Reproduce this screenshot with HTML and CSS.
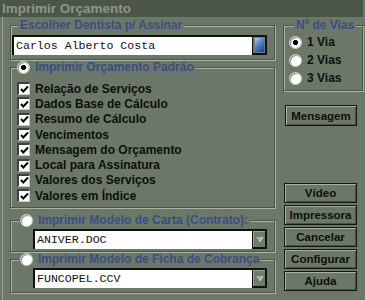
FILE: index.html
```html
<!DOCTYPE html>
<html lang="pt">
<head>
<meta charset="utf-8">
<title>Imprimir Orçamento</title>
<link rel="stylesheet" href="styles.css">
</head>
<body>
<div class="win">
  <div class="title">Imprimir Orçamento</div>
  <div class="main">
    <div class="left">
      <fieldset class="grp g1">
        <legend>Escolher Dentista p/ Assinar</legend>
        <div class="combo">
          <div class="field">Carlos Alberto Costa</div>
          <div class="lookbtn"><span class="lookicon"></span></div>
        </div>
      </fieldset>
      <fieldset class="grp g2">
        <legend><span class="radio on"></span>Imprimir Orçamento Padrão</legend>
        <ul class="checks">
          <li><span class="chk"><svg width="9" height="9" viewBox="0 0 9 9"><path d="M1 4 L3.3 6.5 L8 1.5" fill="none" stroke="#000" stroke-width="1.9"/></svg></span>Relação de Serviços</li>
          <li><span class="chk"><svg width="9" height="9" viewBox="0 0 9 9"><path d="M1 4 L3.3 6.5 L8 1.5" fill="none" stroke="#000" stroke-width="1.9"/></svg></span>Dados Base de Cálculo</li>
          <li><span class="chk"><svg width="9" height="9" viewBox="0 0 9 9"><path d="M1 4 L3.3 6.5 L8 1.5" fill="none" stroke="#000" stroke-width="1.9"/></svg></span>Resumo de Cálculo</li>
          <li><span class="chk"><svg width="9" height="9" viewBox="0 0 9 9"><path d="M1 4 L3.3 6.5 L8 1.5" fill="none" stroke="#000" stroke-width="1.9"/></svg></span>Vencimentos</li>
          <li><span class="chk"><svg width="9" height="9" viewBox="0 0 9 9"><path d="M1 4 L3.3 6.5 L8 1.5" fill="none" stroke="#000" stroke-width="1.9"/></svg></span>Mensagem do Orçamento</li>
          <li><span class="chk"><svg width="9" height="9" viewBox="0 0 9 9"><path d="M1 4 L3.3 6.5 L8 1.5" fill="none" stroke="#000" stroke-width="1.9"/></svg></span>Local para Assinatura</li>
          <li><span class="chk"><svg width="9" height="9" viewBox="0 0 9 9"><path d="M1 4 L3.3 6.5 L8 1.5" fill="none" stroke="#000" stroke-width="1.9"/></svg></span>Valores dos Serviços</li>
          <li><span class="chk"><svg width="9" height="9" viewBox="0 0 9 9"><path d="M1 4 L3.3 6.5 L8 1.5" fill="none" stroke="#000" stroke-width="1.9"/></svg></span>Valores em Índice</li>
        </ul>
      </fieldset>
      <fieldset class="grp g3">
        <legend><span class="radio"></span>Imprimir Modelo de Carta (Contrato):</legend>
        <div class="combo">
          <div class="field">ANIVER.DOC</div>
          <div class="dropbtn"><svg width="9" height="7" viewBox="0 0 9 7"><path d="M1 1 H8 L4.5 6 Z" fill="#a7b1a4"/><path d="M4.5 6 L8 1" stroke="#e4e9e2" stroke-width="1"/></svg></div>
        </div>
      </fieldset>
      <fieldset class="grp g4">
        <legend><span class="radio"></span>Imprimir Modelo de Ficha de Cobrança</legend>
        <div class="combo">
          <div class="field">FUNCOPEL.CCV</div>
          <div class="dropbtn"><svg width="9" height="7" viewBox="0 0 9 7"><path d="M1 1 H8 L4.5 6 Z" fill="#a7b1a4"/><path d="M4.5 6 L8 1" stroke="#e4e9e2" stroke-width="1"/></svg></div>
        </div>
      </fieldset>
    </div>
    <div class="right">
      <fieldset class="grp vias">
        <legend>Nº de Vias</legend>
        <div class="opt"><span class="radio on"></span>1 Via</div>
        <div class="opt"><span class="radio"></span>2 Vias</div>
        <div class="opt"><span class="radio"></span>3 Vias</div>
      </fieldset>
      <button class="btn msg">Mensagem</button>
      <div class="btns">
        <button class="btn">Vídeo</button>
        <button class="btn">Impressora</button>
        <button class="btn">Cancelar</button>
        <button class="btn">Configurar</button>
        <button class="btn">Ajuda</button>
      </div>
    </div>
  </div>
</div>
</body>
</html>
```
FILE: styles.css
```css
html, body {
  margin: 0;
  padding: 0;
  background: #6b7867;
}
.win {
  width: 365px;
  height: 300px;
  background: #6b7867;
  font-family: "Liberation Sans", Arial, sans-serif;
  font-weight: bold;
  font-size: 12px;
  color: #0d0f0c;
  overflow: hidden;
}
.title {
  height: 17px;
  width: 363px;
  background: #4b5648;
  color: #8c978a;
  font-size: 13.5px;
  line-height: 17px;
  padding-left: 2px;
  box-sizing: border-box;
}
.main {
  display: flex;
  margin-left: 2px;
  height: 283px;
  box-sizing: border-box;
  border-left: 1px solid #9aa597;
  padding: 2px 0 0 7px;
}
.left {
  width: 265px;
  display: flex;
  flex-direction: column;
}
.grp {
  margin: 0;
  min-width: 0;
  border: 1px solid #4b5649;
  box-shadow: inset 1px 1px 0 #a9b3a6, 1px 1px 0 #a9b3a6;
}
.grp legend {
  line-height: 12px;
  height: 12px;
  padding: 0 2px;
  margin-left: 6px;
  color: #3c4d86;
  background: #6b7867;
  display: flex;
  align-items: center;
  white-space: nowrap;
}
.g1 { padding: 4px 7px 4px 1px; }
.g2 { margin-top: 1px; padding: 8px 6px 4px 6px; }
.g2 legend { margin-left: 0; padding-left: 1px; }
.g3 { margin-top: 6px; padding: 3px 7px 2px 22px; }
.g4 { margin-top: 1px; padding: 3px 7px 4px 22px; }
.g3 legend, .g4 legend { margin-left: -14px; }

.combo {
  display: flex;
  height: 20px;
}
.field {
  flex: 1;
  background: #fff;
  border-top: 2px solid #0e110d;
  border-left: 2px solid #0e110d;
  font-family: "Liberation Mono", "Courier New", monospace;
  font-weight: normal;
  font-size: 11.6px;
  line-height: 17px;
  padding-left: 2px;
  color: #111;
  box-sizing: border-box;
}
.lookbtn, .dropbtn {
  width: 15px;
  box-sizing: border-box;
  border: 2px solid #10130f;
  border-left-width: 1px;
  background: #6f7c6b;
  display: flex;
  align-items: center;
  justify-content: center;
}
.lookicon {
  width: 9px;
  height: 14px;
  background: linear-gradient(135deg, #b8d2f4 0, #5d8fd8 35%, #2c5cae 75%, #1e4588 100%);
}
.dropbtn {
  box-shadow: inset 1px 1px 0 #9aa596;
}

.radio {
  display: inline-block;
  flex: none;
  width: 11px;
  height: 11px;
  border-radius: 50%;
  background: #fff;
  box-shadow: 0 0 0 1px #c9d0c6, inset 1px 1px 0 #8e988b;
  margin-right: 6px;
}
.radio.on {
  background: radial-gradient(circle, #000 0 2.3px, #fff 2.8px);
}

.checks {
  list-style: none;
  margin: 0;
  padding: 0;
}
.checks li {
  height: 15.3px;
  display: flex;
  align-items: center;
  white-space: nowrap;
}
.chk {
  flex: none;
  width: 13px;
  height: 13px;
  box-sizing: border-box;
  background: #fff;
  border-top: 2px solid #3a4338;
  border-left: 2px solid #3a4338;
  border-right: 1px solid #c5ccc2;
  border-bottom: 1px solid #c5ccc2;
  display: flex;
  align-items: center;
  justify-content: center;
  margin-right: 5px;
}

.right {
  width: 80px;
  margin-left: 8px;
  display: flex;
  flex-direction: column;
}
.vias {
  padding: 2px 4px 3px 6px;
}
.vias legend {
  margin-left: 4px;
}
.opt {
  height: 18px;
  display: flex;
  align-items: center;
  white-space: nowrap;
}
.opt .radio { margin-right: 6px; }

.btn {
  font-family: "Liberation Sans", Arial, sans-serif;
  font-weight: bold;
  font-size: 11.5px;
  color: #0d0f0c;
  background: #6b7867;
  border: 1px solid #141813;
  box-shadow: inset 1px 1px 0 #a6b0a3, inset -1px -1px 0 #48523f;
  padding: 0;
  height: 20px;
  width: 73px;
  display: block;
}
.msg {
  margin-top: 14px;
  margin-left: 2px;
  width: 72px;
  height: 21px;
}
.btns {
  margin-top: 57px;
  margin-left: 1px;
  display: flex;
  flex-direction: column;
  gap: 2px;
}
```
